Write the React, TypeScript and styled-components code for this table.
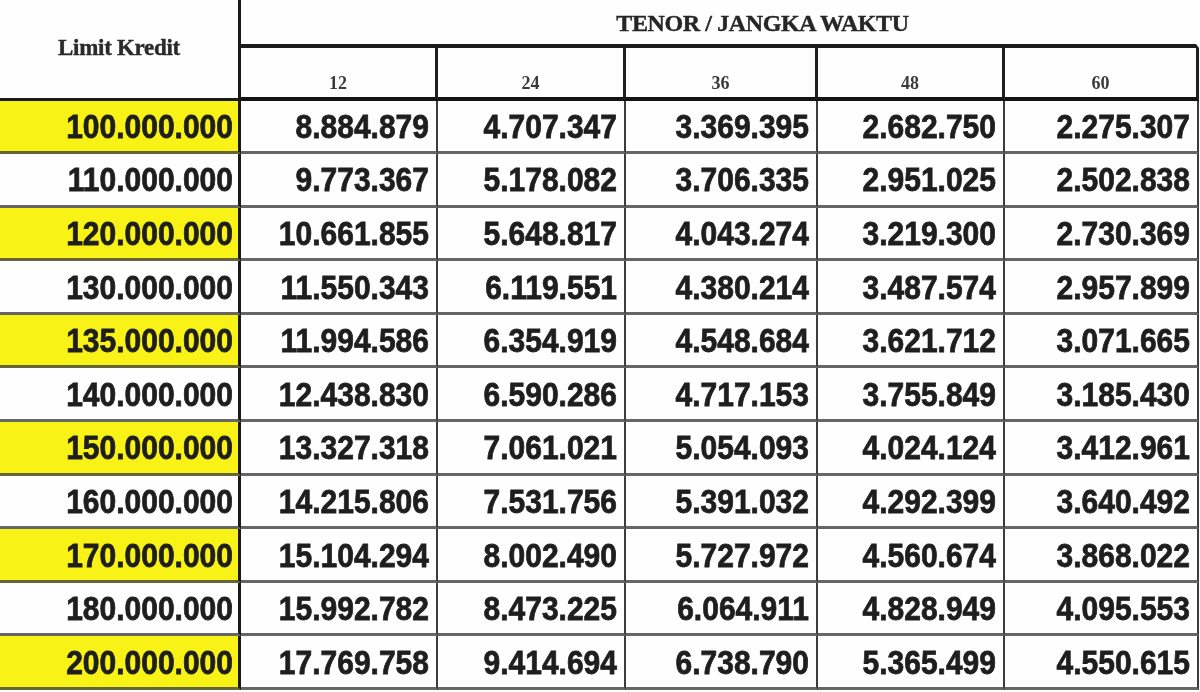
import React from "react";
import styled, { createGlobalStyle } from "styled-components";

const GlobalStyle = createGlobalStyle`
  html, body {
    margin: 0;
    padding: 0;
    background: #fdfdfd;
  }
  #root {
    width: 1200px;
    height: 692px;
    overflow: hidden;
  }
`;

const Sheet = styled.div`
  display: grid;
  grid-template-columns: 241px 197px 188px 192px 187px 194px;
  grid-template-rows: 48px 52.5px repeat(11, 53.6px);
  width: 1199px;
  background: #fefefe;
  filter: blur(0.6px);
`;

const LimitHead = styled.div`
  grid-column: 1;
  grid-row: 1 / span 2;
  box-sizing: border-box;
  border-right: 3px solid #1a1a1a;
  border-bottom: 3px solid #1a1a1a;
  display: flex;
  align-items: center;
  justify-content: center;
  padding-bottom: 1px;
  font-family: "Liberation Serif", "Times New Roman", serif;
  font-weight: 700;
  font-size: 23px;
  letter-spacing: -0.3px;
  color: #2a2a2a;
  -webkit-text-stroke: 0.4px #2a2a2a;
`;

const TenorHead = styled.div`
  grid-column: 2 / span 5;
  grid-row: 1;
  box-sizing: border-box;
  border-bottom: 4px solid #1c1c1c;
  border-right: 3px solid transparent;
  display: flex;
  align-items: flex-end;
  justify-content: center;
  padding: 0 0 7px 88px;
  font-family: "Liberation Serif", "Times New Roman", serif;
  font-weight: 700;
  font-size: 24px;
  letter-spacing: -0.4px;
  color: #262626;
  -webkit-text-stroke: 0.4px #262626;
`;

const TermHead = styled.div`
  box-sizing: border-box;
  border-right: 3px solid #1f1f1f;
  border-bottom: 4px solid #141414;
  display: flex;
  align-items: flex-end;
  justify-content: center;
  padding-bottom: 3px;
  font-family: "Liberation Serif", "Times New Roman", serif;
  font-weight: 700;
  font-size: 18px;
  color: #3a3a3a;
`;

const Cell = styled.div<{ $limit?: boolean; $yellow?: boolean }>`
  box-sizing: border-box;
  display: flex;
  align-items: center;
  justify-content: flex-end;
  padding: 2px ${(p) => (p.$limit ? "5px" : "7px")} 0 0;
  background: ${(p) => (p.$yellow ? "#f8f216" : "transparent")};
  border-right: ${(p) => (p.$limit ? "3px solid #1a1a1a" : "2px solid #3c3c3c")};
  border-bottom: 3px solid ${(p) => (p.$yellow ? "#66653a" : "#666666")};
  font-family: "Liberation Sans", Arial, sans-serif;
  font-weight: 700;
  font-size: 30px;
  color: #1e1e1e;
  overflow: hidden;
`;

const Figure = styled.span`
  display: inline-block;
  transform: scaleY(1.12);
  -webkit-text-stroke: 0.7px #1e1e1e;
`;

const terms = ["12", "24", "36", "48", "60"];

const rows: [string, string[]][] = [
  ["100.000.000", ["8.884.879", "4.707.347", "3.369.395", "2.682.750", "2.275.307"]],
  ["110.000.000", ["9.773.367", "5.178.082", "3.706.335", "2.951.025", "2.502.838"]],
  ["120.000.000", ["10.661.855", "5.648.817", "4.043.274", "3.219.300", "2.730.369"]],
  ["130.000.000", ["11.550.343", "6.119.551", "4.380.214", "3.487.574", "2.957.899"]],
  ["135.000.000", ["11.994.586", "6.354.919", "4.548.684", "3.621.712", "3.071.665"]],
  ["140.000.000", ["12.438.830", "6.590.286", "4.717.153", "3.755.849", "3.185.430"]],
  ["150.000.000", ["13.327.318", "7.061.021", "5.054.093", "4.024.124", "3.412.961"]],
  ["160.000.000", ["14.215.806", "7.531.756", "5.391.032", "4.292.399", "3.640.492"]],
  ["170.000.000", ["15.104.294", "8.002.490", "5.727.972", "4.560.674", "3.868.022"]],
  ["180.000.000", ["15.992.782", "8.473.225", "6.064.911", "4.828.949", "4.095.553"]],
  ["200.000.000", ["17.769.758", "9.414.694", "6.738.790", "5.365.499", "4.550.615"]],
];

export default function App() {
  return (
    <>
      <GlobalStyle />
      <Sheet>
        <LimitHead>Limit Kredit</LimitHead>
        <TenorHead>TENOR / JANGKA WAKTU</TenorHead>
        {terms.map((t) => (
          <TermHead key={t}>{t}</TermHead>
        ))}
        {rows.map(([limit, values], i) => (
          <React.Fragment key={limit}>
            <Cell $limit $yellow={i % 2 === 0}>
              <Figure>{limit}</Figure>
            </Cell>
            {values.map((v, j) => (
              <Cell key={j}>
                <Figure>{v}</Figure>
              </Cell>
            ))}
          </React.Fragment>
        ))}
      </Sheet>
    </>
  );
}
